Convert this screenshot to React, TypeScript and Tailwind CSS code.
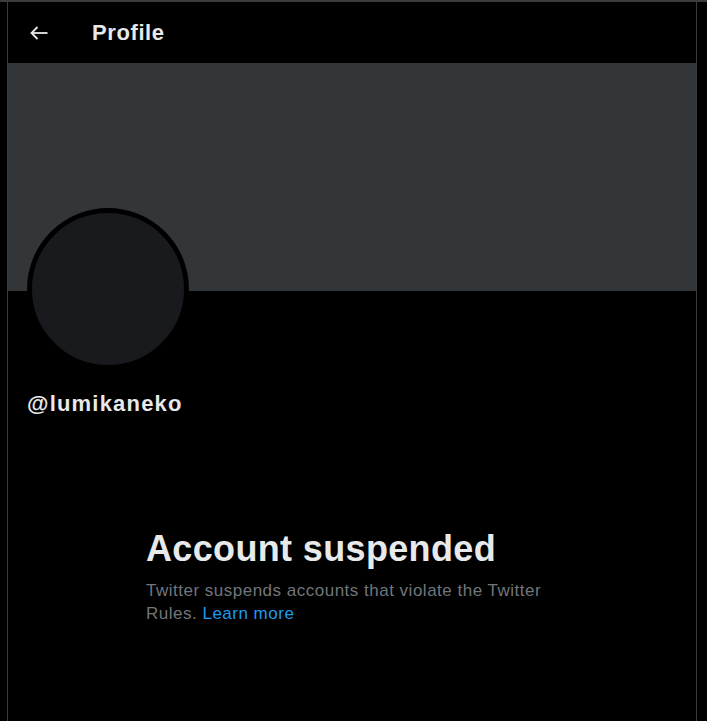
import React from "react"

const BackArrow = () => (
  <svg width="18" height="14" viewBox="0 0 18 14" fill="none" className="block">
    <path d="M1.5 7H17.5" stroke="#e7e9ea" strokeWidth="1.8" />
    <path d="M7.5 1L1.5 7L7.5 13" stroke="#e7e9ea" strokeWidth="1.8" />
  </svg>
)

const App: React.FC = () => {
  return (
    <div className="flex h-[721px] w-full overflow-hidden border-t-2 border-[#3c3c3c] bg-black font-['Liberation_Sans',Arial,sans-serif] text-[#e7e9ea]">
      <div className="w-[7px] shrink-0" />
      <main className="flex w-[690px] shrink-0 flex-col border-x border-[#3a3a3a]">
        <header className="flex h-[61px] items-center">
          <button type="button" className="ml-[15px] flex h-8 w-8 items-center justify-center">
            <BackArrow />
          </button>
          <h1 className="ml-[37px] text-[22px] font-bold leading-none tracking-[0.6px]">Profile</h1>
        </header>

        <div className="h-[228px] bg-[#333639]" />

        <div className="ml-[19px] -mt-[83px] h-[162px] w-[162px] rounded-full border-[5px] border-black bg-[#191a1d]" />

        <div className="ml-[19px] mt-[22px] text-[22px] font-bold leading-6 tracking-[1.2px]">@lumikaneko</div>

        <section className="mx-auto mt-[111px] w-[412px]">
          <h2 className="text-[36px] font-bold leading-[43px] tracking-[0.35px]">Account suspended</h2>
          <p className="mt-[9px] text-[17px] leading-[23px] tracking-[0.5px] text-[#71767b]">
            Twitter suspends accounts that violate the Twitter Rules.{" "}
            <a href="#" className="text-[#1d9bf0]">Learn more</a>
          </p>
        </section>
      </main>
    </div>
  )
}

export default App
